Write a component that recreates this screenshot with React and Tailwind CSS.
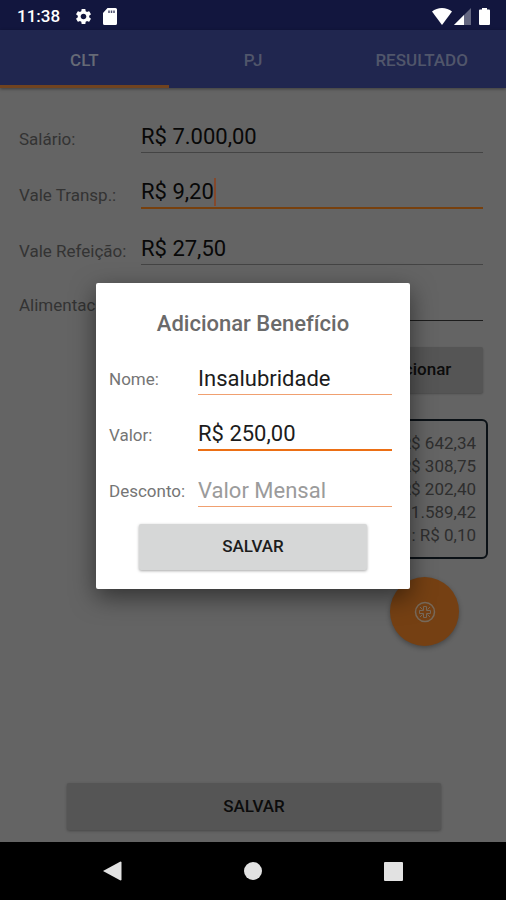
// Salary calculator: CLT tab with the "Adicionar Benefício" dialog open.

import { clsx } from 'clsx';
import { MdSettings } from 'react-icons/md';

const TABS = ['CLT', 'PJ', 'RESULTADO'];

const DISCOUNTS = ['R$ 642,34', 'R$ 308,75', 'R$ 202,40', 'R$ 1.589,42', ': R$ 0,10'];

function StatusBar() {
  return (
    <div className="flex h-[30px] items-center bg-[#12163e] pl-[17px] pr-4 pt-0.5 text-white">
      <span className="text-[17px] font-medium leading-5">11:38</span>
      <MdSettings className="ml-3.5 size-[19px]" />
      <svg viewBox="0 0 14 17" className="ml-2.5 h-[17px] w-3.5">
        <path d="M4.500 0h8A1.500 1.500 0 0 1 14 1.500v14a1.500 1.500 0 0 1-1.500 1.500h-11A1.500 1.500 0 0 1 0 15.500V5z" fill="currentColor" />
        <path d="M6 2.500v2.500M8.500 2.500v2.500M11 2.500v2.500" stroke="#4a4d6c" strokeWidth="1.500" />
      </svg>
      <svg viewBox="0 0 20 17" className="ml-auto h-[17px] w-5">
        <path d="M10 17 0 3.500C2.800 1.200 6.200 0 10 0s7.200 1.200 10 3.500z" fill="currentColor" />
      </svg>
      <svg viewBox="0 0 17 17" className="ml-0.5 size-[17px]">
        <path d="M0 17 17 0v17z" fill="currentColor" opacity="0.350" />
        <path d="M0 17 10 7v10z" fill="currentColor" />
      </svg>
      <svg viewBox="0 0 11 17" className="ml-2 h-[17px] w-[11px]">
        <path d="M3 0h5v1.500h2a1 1 0 0 1 1 1V16a1 1 0 0 1-1 1H1a1 1 0 0 1-1-1V2.500a1 1 0 0 1 1-1h2z" fill="currentColor" />
      </svg>
    </div>
  );
}

function Tabs() {
  return (
    <div role="tablist" className="grid h-[58px] grid-cols-3 bg-[#20264f] shadow-[0_1px_3px_rgba(0,0,0,0.4)]">
      {TABS.map((tab, i) => (
        <button
          key={tab}
          type="button"
          role="tab"
          aria-selected={i === 0}
          className={clsx(
            'border-b-3 pt-1.5 text-[17px] font-medium',
            i === 0 ? 'border-[#70431f] text-[#666a76]' : 'border-transparent text-[#51566b]',
          )}
        >
          {tab}
        </button>
      ))}
    </div>
  );
}

function Field({ id, label, value, focused, caret }) {
  return (
    <div className="flex h-14 items-end">
      <label htmlFor={id} className="w-[122px] shrink-0 whitespace-nowrap pb-1 text-[17px] leading-5 text-[#333]">
        {label}
      </label>
      <div className={clsx('flex h-9 flex-1 items-center pt-1', focused ? 'border-b-2 border-[#77400e]' : 'border-b border-[#444]')}>
        <input
          id={id}
          defaultValue={value}
          className={clsx('min-w-0 bg-transparent text-[22px] leading-7 text-[#080808] outline-none', caret ? 'field-sizing-content' : 'w-full')}
        />
        {caret && <span className="h-7 w-0.5 bg-[#85492c]" />}
      </div>
    </div>
  );
}

function DialogField({ id, label, value, placeholder, focused }) {
  return (
    <div className="flex h-14 items-end pr-[5px]">
      <label htmlFor={id} className="w-[89px] shrink-0 whitespace-nowrap pb-1.5 text-[17px] leading-5 text-[#757575]">
        {label}
      </label>
      <input
        id={id}
        defaultValue={value}
        placeholder={placeholder}
        className={clsx(
          'h-9 min-w-0 flex-1 bg-transparent pt-[3px] text-[22px] leading-7 text-[#1c1c1c] outline-none placeholder:text-[#9b9b9b]',
          focused ? 'border-b-2 border-[#ec6f14]' : 'border-b border-[#f0a070]',
        )}
      />
    </div>
  );
}

function AddBenefitDialog() {
  return (
    <div className="absolute inset-0 flex items-center justify-center">
      <form
        role="dialog"
        aria-labelledby="dialog-title"
        className="flex w-[314px] flex-col rounded-xs bg-white px-[13px] pb-[19px] pt-[26px] shadow-[0_8px_24px_rgba(0,0,0,0.5)]"
      >
        <h2 id="dialog-title" className="text-center text-[22px] font-medium leading-[30px] text-[#6a6a6a]">
          Adicionar Benefício
        </h2>
        <DialogField id="nome" label="Nome:" value="Insalubridade" />
        <DialogField id="valor" label="Valor:" value="R$ 250,00" focused />
        <DialogField id="desconto" label="Desconto:" placeholder="Valor Mensal" />
        <button
          type="button"
          className="mx-auto mt-[17px] h-[46px] w-[228px] rounded-xs bg-[#d6d7d7] text-[17px] font-medium text-[#1c1c1c] shadow-[0_1px_3px_rgba(0,0,0,0.35)]"
        >
          SALVAR
        </button>
      </form>
    </div>
  );
}

function NavBar() {
  return (
    <nav className="flex h-[58px] items-center justify-center gap-[122px] bg-black text-[#e2e2e2]">
      <button type="button" aria-label="Voltar">
        <svg viewBox="0 0 19 20" className="h-5 w-[19px]">
          <path d="M0 10 17.500 0.500 18.500 1v18l-1 0.500z" fill="currentColor" />
        </svg>
      </button>
      <button type="button" aria-label="Início">
        <svg viewBox="0 0 18 18" className="size-[18px]">
          <circle cx="9" cy="9" r="9" fill="currentColor" />
        </svg>
      </button>
      <button type="button" aria-label="Recentes">
        <svg viewBox="0 0 19 19" className="size-[19px]">
          <rect width="19" height="19" rx="1" fill="currentColor" />
        </svg>
      </button>
    </nav>
  );
}

export default function App() {
  return (
    <div className="flex min-h-screen flex-col bg-[#646464] font-['Roboto',sans-serif]">
      <StatusBar />
      <div className="relative flex flex-1 flex-col">
        <Tabs />
        <main className="flex flex-1 flex-col pb-3 pl-[19px] pr-[23px] pt-[9px]">
          <Field id="salario" label="Salário:" value="R$ 7.000,00" />
          <Field id="transporte" label="Vale Transp.:" value="R$ 9,20" focused caret />
          <Field id="refeicao" label="Vale Refeição:" value="R$ 27,50" />
          <div className="flex h-14 items-end">
            <label htmlFor="alimentacao" className="w-[122px] shrink-0 pb-1.5 text-[17px] leading-5 text-[#333]">
              Alimentacao:
            </label>
            <input id="alimentacao" className="h-9 min-w-0 flex-1 border-b border-[#1c1c1c] bg-transparent text-[22px] outline-none" />
          </div>

          <button type="button" className="mt-[26px] h-[46px] w-[136px] self-end rounded-xs bg-[#555] text-[17px] font-medium text-[#0c0c0c] shadow-[0_1px_2px_rgba(0,0,0,0.25)]">
            Adicionar
          </button>

          <ul className="-mr-[5px] mt-[26px] w-[280px] self-end rounded-md border-2 border-[#0b1116] px-2.5 pb-2.5 pt-[11px] text-right text-[17px] leading-[23px] text-[#2e2e2e]">
            {DISCOUNTS.map((value) => (
              <li key={value}>{value}</li>
            ))}
          </ul>

          <button
            type="button"
            aria-label="Adicionar benefício"
            className="mr-6 mt-[18px] flex size-[69px] items-center justify-center self-end rounded-full bg-[#754013] shadow-[0_2px_5px_rgba(0,0,0,0.3)]"
          >
            <svg viewBox="0 0 22 22" className="size-[22px]" fill="none" stroke="#77695a">
              <circle cx="11" cy="11" r="9.500" strokeWidth="1.500" />
              <path d="M9.500 5.500h3v4h4v3h-4v4h-3v-4h-4v-3h4z" strokeWidth="1" />
              <path d="M6 6l2.500 2.500M16 6l-2.500 2.500M6 16l2.500-2.500M16 16l-2.500-2.500" strokeWidth="1" />
            </svg>
          </button>

          <button type="button" className="ml-12 mr-[42px] mt-auto h-[47px] rounded-xs bg-[#555] text-[17px] font-medium text-[#0c0c0c] shadow-[0_1px_3px_rgba(0,0,0,0.3)]">
            SALVAR
          </button>
        </main>
        <AddBenefitDialog />
      </div>
      <NavBar />
    </div>
  );
}
